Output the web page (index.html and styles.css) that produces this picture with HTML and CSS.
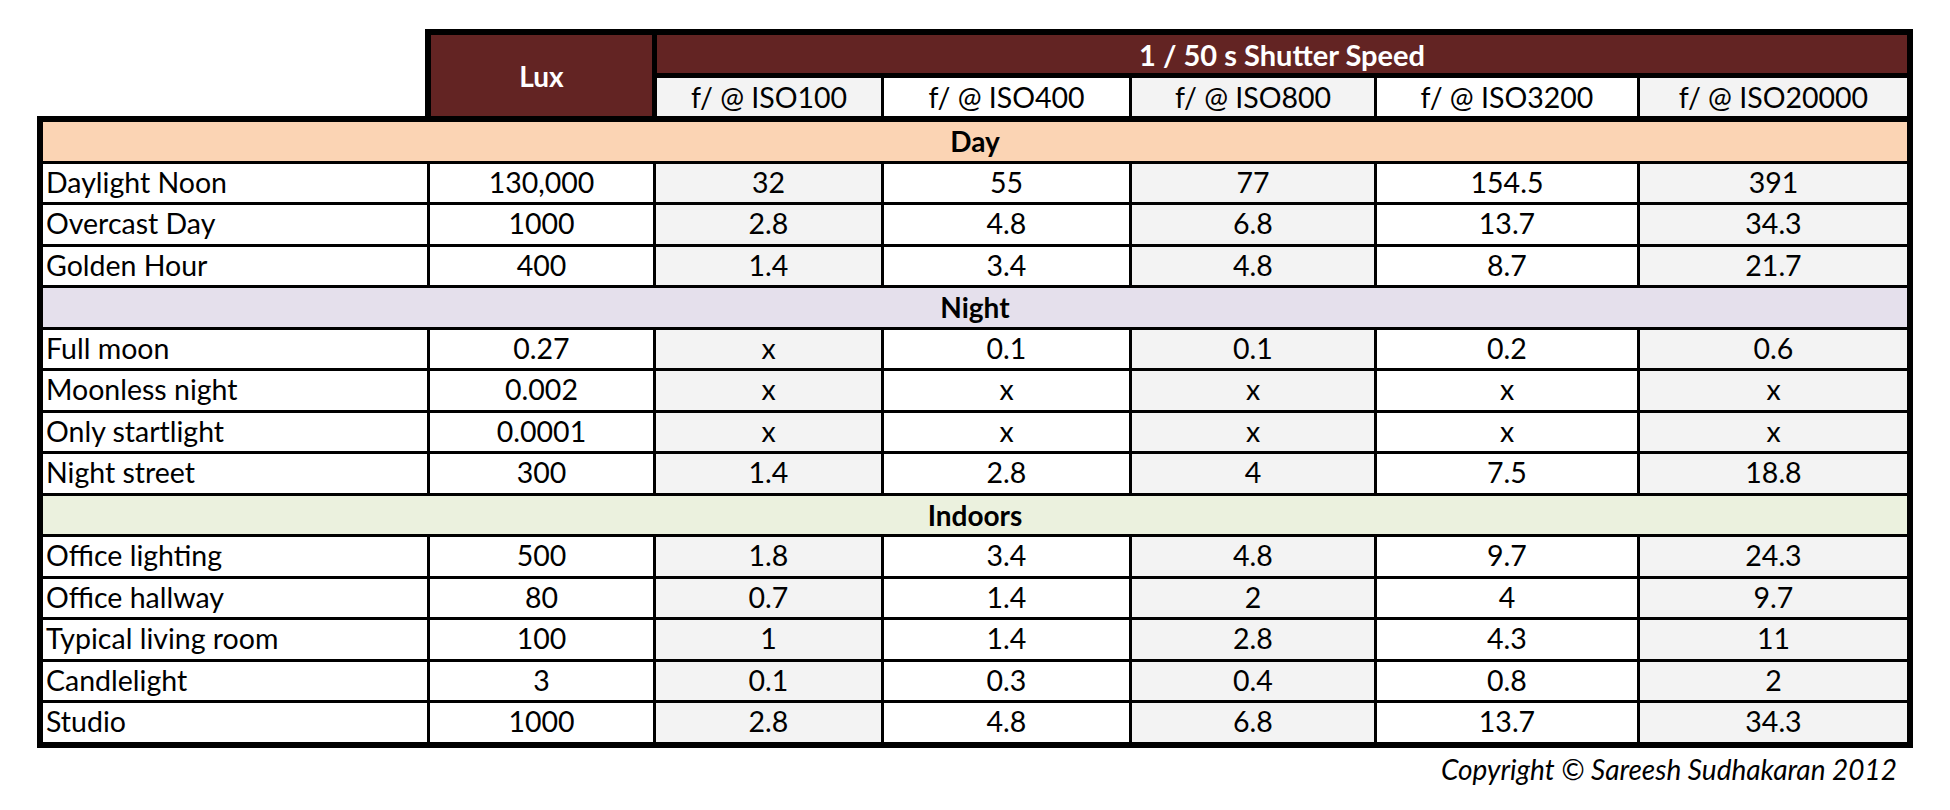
FILE: index.html
```html
<!DOCTYPE html>
<html>
<head>
<meta charset="utf-8">
<title>Lux table</title>
<link rel="stylesheet" href="styles.css">
</head>
<body>
<div class="page">
  <div class="head">
    <div class="lux">Lux</div>
    <div class="shutter">1 / 50 s Shutter Speed</div>
    <div class="sub g">f/ @ ISO100</div>
    <div class="sub">f/ @ ISO400</div>
    <div class="sub g">f/ @ ISO800</div>
    <div class="sub">f/ @ ISO3200</div>
    <div class="sub g">f/ @ ISO20000</div>
  </div>
  <div class="tbl">
    <div class="band day">Day</div>
    <div class="c name">Daylight Noon</div><div class="c">130,000</div><div class="c g">32</div><div class="c">55</div><div class="c g">77</div><div class="c">154.5</div><div class="c g">391</div>
    <div class="c name">Overcast Day</div><div class="c">1000</div><div class="c g">2.8</div><div class="c">4.8</div><div class="c g">6.8</div><div class="c">13.7</div><div class="c g">34.3</div>
    <div class="c name">Golden Hour</div><div class="c">400</div><div class="c g">1.4</div><div class="c">3.4</div><div class="c g">4.8</div><div class="c">8.7</div><div class="c g">21.7</div>
    <div class="band night">Night</div>
    <div class="c name">Full moon</div><div class="c">0.27</div><div class="c g">x</div><div class="c">0.1</div><div class="c g">0.1</div><div class="c">0.2</div><div class="c g">0.6</div>
    <div class="c name">Moonless night</div><div class="c">0.002</div><div class="c g">x</div><div class="c">x</div><div class="c g">x</div><div class="c">x</div><div class="c g">x</div>
    <div class="c name">Only startlight</div><div class="c">0.0001</div><div class="c g">x</div><div class="c">x</div><div class="c g">x</div><div class="c">x</div><div class="c g">x</div>
    <div class="c name">Night street</div><div class="c">300</div><div class="c g">1.4</div><div class="c">2.8</div><div class="c g">4</div><div class="c">7.5</div><div class="c g">18.8</div>
    <div class="band indoors">Indoors</div>
    <div class="c name">Office lighting</div><div class="c">500</div><div class="c g">1.8</div><div class="c">3.4</div><div class="c g">4.8</div><div class="c">9.7</div><div class="c g">24.3</div>
    <div class="c name">Office hallway</div><div class="c">80</div><div class="c g">0.7</div><div class="c">1.4</div><div class="c g">2</div><div class="c">4</div><div class="c g">9.7</div>
    <div class="c name">Typical living room</div><div class="c">100</div><div class="c g">1</div><div class="c">1.4</div><div class="c g">2.8</div><div class="c">4.3</div><div class="c g">11</div>
    <div class="c name">Candlelight</div><div class="c">3</div><div class="c g">0.1</div><div class="c">0.3</div><div class="c g">0.4</div><div class="c">0.8</div><div class="c g">2</div>
    <div class="c name">Studio</div><div class="c">1000</div><div class="c g">2.8</div><div class="c">4.8</div><div class="c g">6.8</div><div class="c">13.7</div><div class="c g">34.3</div>
  </div>
  <div class="copy">Copyright © Sareesh Sudhakaran 2012</div>
</div>
</body>
</html>
```
FILE: styles.css
```css
html, body {
  margin: 0;
  padding: 0;
  background: #ffffff;
}
body {
  font-family: Lato, "Open Sans", "Liberation Sans", sans-serif;
  color: #000;
}
.page {
  padding: 29px 0 0 37px;
  width: 1876px;
}
.head {
  margin-left: 388px;
  width: 1488px;
  box-sizing: border-box;
  background: #000;
  padding: 6px 6px 0 6px;
  display: grid;
  grid-template-columns: 223px 224px 245px 242px 260px 267px;
  grid-template-rows: 38px 38px;
  column-gap: 3px;
  row-gap: 5px;
}
.lux {
  grid-row: 1 / 3;
  margin-right: 2px;
  background: #632423;
  color: #fff;
  font-weight: 700;
  font-size: 28px;
  display: flex;
  align-items: center;
  justify-content: center;
}
.shutter {
  grid-column: 2 / 7;
  background: #632423;
  color: #fff;
  font-weight: 700;
  font-size: 29px;
  display: flex;
  align-items: center;
  justify-content: center;
}
.sub {
  background: #fff;
  font-size: 28.5px;
  display: flex;
  align-items: center;
  justify-content: center;
}
.tbl {
  width: 1876px;
  box-sizing: border-box;
  background: #000;
  padding: 6px;
  display: grid;
  grid-template-columns: 384px 223px 225px 245px 242px 260px 267px;
  grid-auto-rows: 38.5px;
  gap: 3px;
}
.c {
  background: #fff;
  font-size: 28.5px;
  line-height: 1;
  padding-bottom: 2px;
  display: flex;
  align-items: center;
  justify-content: center;
  white-space: nowrap;
}
.c.name {
  justify-content: flex-start;
  padding-left: 3px;
}
.g {
  background: #f3f3f3;
}
.band {
  grid-column: 1 / -1;
  font-weight: 700;
  font-size: 28px;
  display: flex;
  align-items: center;
  justify-content: center;
}
.day { background: #fbd4b4; }
.night { background: #e5e0ec; }
.indoors { background: #ebf1de; }
.copy {
  margin-top: 4px;
  padding-right: 16px;
  text-align: right;
  font-style: italic;
  font-size: 28px;
}
```
